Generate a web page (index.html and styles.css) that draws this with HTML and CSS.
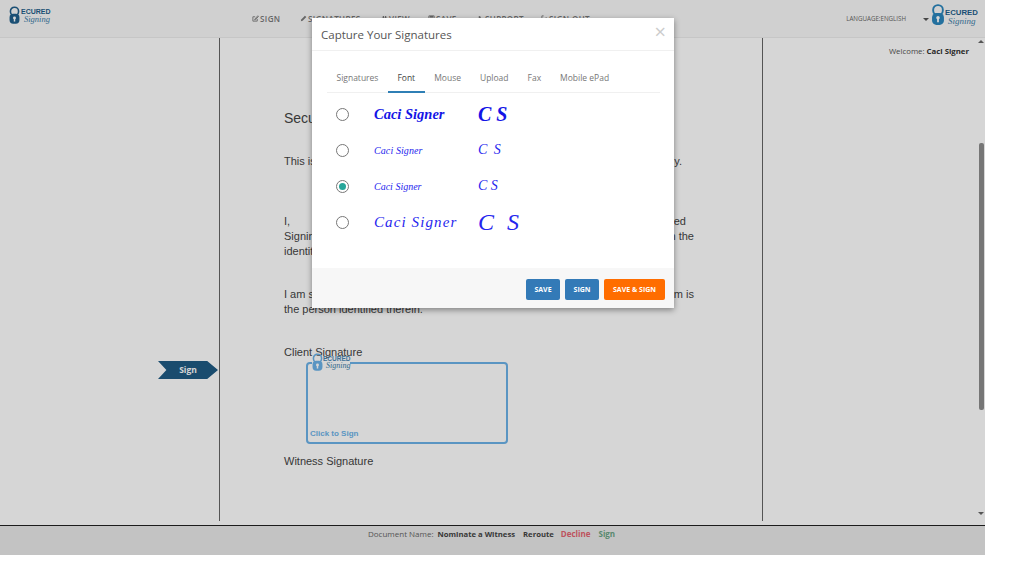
FILE: index.html
```html
<!DOCTYPE html>
<html lang="en">
<head>
    <meta charset="UTF-8">
    <meta name="viewport" content="width=device-width, initial-scale=1.0">
    <title>Capture Your Signatures</title>
    <link rel="stylesheet" href="styles.css">
</head>
<body>
    <svg class="defs" width="0" height="0">
        <symbol id="lock" viewBox="0 0 12 20">
            <rect x="1.6" y="1" width="8.8" height="9" rx="4.2" fill="none" stroke="currentColor" stroke-width="1.7"/>
            <rect x="0.6" y="8.2" width="10.8" height="10.8" rx="4" fill="currentColor"/>
            <circle cx="6" cy="12.6" r="1.6" fill="#fff"/>
            <rect x="5.2" y="13" width="1.6" height="3.6" fill="#fff"/>
        </symbol>
    </svg>

    <div class="app">
        <!-- Top bar -->
        <header class="topbar">
            <div class="logo logo-left">
                <svg class="logo-lock"><use href="#lock"/></svg>
                <div class="logo-text"><b>ECURED</b><i>Signing</i></div>
            </div>
            <nav class="nav">
                <a class="nav-item nav-sign">
                    <svg class="nav-icon" viewBox="0 0 8 8"><path d="M6 4.6V7H1V2h2.6M3.2 4.8 6.6.9l.8.7L4 5.4l-1 .2z" fill="none" stroke="currentColor"/></svg>SIGN
                </a>
                <a class="nav-item nav-signatures">
                    <svg class="nav-icon" viewBox="0 0 8 8"><path d="M1 7l.4-2L5.600.8l1.700 1.600L3 6.600z" fill="currentColor"/></svg>SIGNATURES
                </a>
                <a class="nav-item nav-view">
                    <svg class="nav-icon" viewBox="0 0 8 8"><path d="M1 3h6v4H1zM2 1h1.500v2H2zM4.500 1H6v2H4.500z" fill="currentColor"/></svg>VIEW
                </a>
                <a class="nav-item nav-save">
                    <svg class="nav-icon" viewBox="0 0 8 8"><path d="M1 1h6v6H1z" fill="none" stroke="currentColor"/><path d="M2 1h4v2H2z" fill="currentColor"/></svg>SAVE
                </a>
                <a class="nav-item nav-support">
                    <svg class="nav-icon" viewBox="0 0 8 8"><path d="M2 1.500 3.500 1l1 2-1 .7c.3.700.6 1 1.300 1.300l.7-1 2 1-.5 1.500C4 7 1.500 4.500 2 1.500z" fill="currentColor"/></svg>SUPPORT
                </a>
                <a class="nav-item nav-out">
                    <svg class="nav-icon" viewBox="0 0 8 8"><path d="M3 1H1v6h2M3 4h4M5.500 2.500 7 4 5.500 5.500" fill="none" stroke="currentColor"/></svg>SIGN OUT
                </a>
            </nav>
            <div class="top-right">
                <div class="language">LANGUAGE:ENGLISH</div>
                <div class="caret"></div>
                <div class="logo logo-right">
                    <svg class="logo-lock"><use href="#lock"/></svg>
                    <div class="logo-text"><b>ECURED</b><i>Signing</i></div>
                </div>
            </div>
        </header>

        <!-- Document area -->
        <main class="main">
            <div class="gutter">
                <div class="sign-tag">Sign</div>
            </div>
            <div class="doc">
                <div class="doc-title">Secured</div>
                <div class="para first">
                    <div class="line"><span>This is</span><span>electronically.</span></div>
                </div>
                <div class="para second">
                    <div class="line line-a"><span>I,</span><span>Secured</span></div>
                    <div class="line"><span>Signing</span><span>in the</span></div>
                    <div class="line"><span>identity</span></div>
                </div>
                <div class="para third">
                    <div class="line"><span>I am satisfied</span><span>form is</span></div>
                    <div class="line"><span>the person identified therein.</span></div>
                </div>
                <div class="client-label">Client Signature</div>
                <div class="sig-box">
                    <div class="logo logo-box">
                        <svg class="logo-lock"><use href="#lock"/></svg>
                        <div class="logo-text"><b>ECURED</b><i>Signing</i></div>
                    </div>
                    <span class="click-sign">Click to Sign</span>
                </div>
                <div class="witness-label">Witness Signature</div>
            </div>
            <aside class="side">
                <div class="welcome">Welcome: <b>Caci Signer</b></div>
                <div class="scrollbar">
                    <div class="arrow-up"></div>
                    <div class="thumb"></div>
                    <div class="arrow-down"></div>
                </div>
            </aside>
        </main>

        <!-- Bottom bar -->
        <footer class="bottombar">
            <span class="doc-name">Document Name:</span>
            <b class="doc-value">Nominate a Witness</b>
            <b class="act-reroute">Reroute</b>
            <b class="act-decline">Decline</b>
            <b class="act-sign">Sign</b>
        </footer>

        <div class="backdrop"></div>

        <!-- Modal -->
        <div class="modal">
            <div class="modal-head">
                <span class="modal-title">Capture Your Signatures</span>
                <span class="close">&times;</span>
            </div>
            <div class="modal-body">
                <div class="tabs">
                    <a class="tab">Signatures</a>
                    <a class="tab active">Font</a>
                    <a class="tab">Mouse</a>
                    <a class="tab">Upload</a>
                    <a class="tab">Fax</a>
                    <a class="tab">Mobile ePad</a>
                </div>
                <div class="sig-row">
                    <span class="radio"></span>
                    <span class="sig sig-one">Caci Signer</span>
                    <span class="ini ini-one">C S</span>
                </div>
                <div class="sig-row">
                    <span class="radio"></span>
                    <span class="sig sig-two">Caci Signer</span>
                    <span class="ini ini-two">C S</span>
                </div>
                <div class="sig-row">
                    <span class="radio checked"></span>
                    <span class="sig sig-three">Caci Signer</span>
                    <span class="ini ini-three">C S</span>
                </div>
                <div class="sig-row">
                    <span class="radio"></span>
                    <span class="sig sig-four">Caci Signer</span>
                    <span class="ini ini-four">C S</span>
                </div>
            </div>
            <div class="modal-foot">
                <button class="btn blue">SAVE</button>
                <button class="btn blue">SIGN</button>
                <button class="btn orange">SAVE &amp; SIGN</button>
            </div>
        </div>
    </div>
</body>
</html>
```

FILE: styles.css
```css
html, body {
    margin: 0;
    padding: 0;
    background: #fff;
}
body {
    width: 1024px;
    height: 571px;
    overflow: hidden;
    font-family: "Open Sans", sans-serif;
    color: #333;
}
.defs {
    display: block;
    height: 0;
}
.app {
    position: relative;
    width: 985px;
    height: 555px;
    display: flex;
    flex-direction: column;
    background: #fff;
}

/* top bar */
.topbar {
    height: 37px;
    border-bottom: 1px solid #ececec;
    background: #f8f8f8;
    display: flex;
    align-items: flex-start;
    flex: none;
}
.logo {
    display: flex;
    color: #1f5f8b;
}
.logo-lock {
    width: 11px;
    height: 19px;
    flex: none;
}
.logo-text {
    display: flex;
    flex-direction: column;
    line-height: 1;
}
.logo-text b {
    font: bold 7px "Liberation Sans", sans-serif;
}
.logo-text i {
    font: italic 8.5px/8px "Liberation Serif", serif;
    margin-left: 3px;
    color: #3d7ea8;
}
.logo-left {
    margin: 6px 0 0 9px;
    width: 42px;
    flex: none;
}
.logo-left .logo-text {
    margin: 2px 0 0 1px;
}
.nav {
    margin: 13px 0 0 201px;
    display: flex;
    font-size: 8px;
    font-weight: 600;
    letter-spacing: .4px;
    line-height: 11px;
    color: #7a7a7a;
    white-space: nowrap;
}
.nav-item {
    display: flex;
    align-items: center;
    gap: 1px;
}
.nav-icon {
    width: 7px;
    height: 7px;
    flex: none;
}
.nav-sign { width: 48px; }
.nav-signatures { width: 81px; }
.nav-view { width: 47px; }
.nav-save { width: 49px; }
.nav-support { width: 64px; }
.nav-out { width: 49px; }
.top-right {
    margin-left: auto;
    padding-right: 8px;
    display: flex;
    align-items: flex-start;
}
.language {
    font-size: 6.2px;
    line-height: 10px;
    margin-top: 14px;
    color: #666;
    white-space: nowrap;
}
.caret {
    margin: 18px 0 0 17px;
    border-left: 3px solid transparent;
    border-right: 3px solid transparent;
    border-top: 3px solid #555;
}
.logo-right {
    margin: 4px 0 0 2px;
    width: 46px;
    color: #2a86bd;
}
.logo-right .logo-lock {
    width: 14px;
    height: 22px;
}
.logo-right .logo-text {
    margin-top: 4px;
}
.logo-right .logo-text b {
    font-size: 7.8px;
    color: #1f5f8b;
}
.logo-right .logo-text i {
    font-size: 9px;
    line-height: 9px;
}

/* document */
.main {
    height: 487px;
    display: flex;
    flex: none;
}
.gutter {
    width: 219px;
    flex: none;
}
.sign-tag {
    width: 60px;
    height: 18px;
    margin: 323px 0 0 158px;
    background: #1f5b83;
    color: #fff;
    font: bold 8.5px/18px "Open Sans", sans-serif;
    text-align: center;
    clip-path: polygon(0 0, 82% 0, 100% 50%, 82% 100%, 0 100%, 14% 50%);
}
.doc {
    width: 544px;
    height: 483px;
    flex: none;
    box-sizing: border-box;
    border-left: 1px solid #666;
    border-right: 1px solid #666;
    padding: 72px 0 0 64px;
    font-family: "Liberation Sans", Arial, sans-serif;
    font-size: 11px;
    line-height: 15px;
    color: #444;
}
.doc-title {
    font-size: 14px;
    line-height: 16px;
}
.para.first {
    margin-top: 28px;
}
.para.second {
    margin-top: 45px;
}
.para.third {
    margin-top: 28px;
}
.line {
    width: 410px;
    display: flex;
    justify-content: space-between;
    white-space: nowrap;
}
.first .line {
    width: 398px;
}
.line-a {
    width: 402px;
}
.client-label {
    margin-top: 28px;
}
.sig-box {
    position: relative;
    box-sizing: border-box;
    width: 202px;
    height: 82px;
    margin: 2px 0 0 22px;
    border: 2px solid #6cb2e8;
    border-radius: 4px;
    display: flex;
    align-items: flex-end;
}
.logo-box {
    position: absolute;
    top: -11px;
    left: 4px;
    width: 38px;
    height: 19px;
    background: linear-gradient(transparent 9px, #fff 9px);
    color: #6cb2e8;
}
.logo-box .logo-text {
    margin-top: 2px;
}
.logo-box .logo-text b {
    font-size: 6.5px;
    line-height: 7px;
    color: #4b87b5;
}
.logo-box .logo-text i {
    font-size: 8px;
}
.click-sign {
    font-size: 8px;
    font-weight: bold;
    line-height: 10px;
    color: #6cb2e8;
    margin: 0 0 3px 2px;
}
.witness-label {
    margin-top: 10px;
}
.side {
    width: 222px;
    flex: none;
    display: flex;
    justify-content: flex-end;
}
.welcome {
    font-size: 7.8px;
    line-height: 12px;
    margin: 7px 8px 0 0;
    white-space: nowrap;
    color: #555;
}
.welcome b {
    color: #333;
}
.scrollbar {
    width: 8px;
    flex: none;
    display: flex;
    flex-direction: column;
    align-items: center;
}
.thumb {
    width: 5px;
    height: 267px;
    margin: 100px 0 102px;
    background: #8d8d8d;
    border-radius: 2px;
}
.arrow-up, .arrow-down {
    border-left: 3px solid transparent;
    border-right: 3px solid transparent;
}
.arrow-up {
    margin-top: 2px;
    border-bottom: 3px solid #666;
}
.arrow-down {
    border-top: 3px solid #666;
}

/* bottom bar */
.bottombar {
    height: 30px;
    box-sizing: border-box;
    border-top: 1px solid #222;
    background: #e9e9e9;
    display: flex;
    align-items: flex-start;
    padding: 2px 0 0 368px;
    font-size: 8px;
    line-height: 12px;
    white-space: nowrap;
    flex: none;
}
.doc-name { color: #666; }
.doc-value { margin-left: 4px; color: #444; font-size: 7.7px; }
.act-reroute { margin-left: 8px; color: #444; font-size: 7.7px; }
.act-decline { margin-left: 7px; color: #e2636f; }
.act-sign { margin-left: 8px; color: #6aa484; }

/* modal */
.backdrop {
    position: absolute;
    inset: 0;
    background: rgba(0, 0, 0, .16);
}
.modal {
    position: absolute;
    top: 18px;
    left: 312px;
    width: 362px;
    height: 290px;
    background: #fff;
    box-shadow: 0 2px 6px rgba(0, 0, 0, .4);
    display: flex;
    flex-direction: column;
}
.modal-head {
    height: 32px;
    border-bottom: 1px solid #f0f0f0;
    padding: 0 9px;
    display: flex;
    align-items: center;
    justify-content: space-between;
    flex: none;
}
.modal-title {
    font-size: 11.5px;
    color: #555;
}
.close {
    font-size: 20px;
    line-height: 20px;
    color: #ccc;
    margin: -5px -1px 0 0;
}
.modal-body {
    flex: 1;
    padding: 19px 14px 0 15px;
}
.tabs {
    height: 22px;
    display: flex;
    border-bottom: 1px solid #f0f0f0;
    font-size: 8.5px;
    line-height: 16px;
    color: #777;
}
.tab {
    padding: 0 9.5px;
    height: 21px;
}
.tab.active {
    color: #444;
    border-bottom: 2px solid #2f7fb5;
}
.sig-row {
    height: 36px;
    display: flex;
    align-items: center;
    padding-left: 9px;
    color: #2626ee;
    font-family: "Liberation Serif", serif;
    font-style: italic;
    white-space: nowrap;
}
.tabs + .sig-row {
    margin-top: 3px;
}
.radio {
    width: 13px;
    height: 13px;
    box-sizing: border-box;
    border: 1.5px solid #777;
    border-radius: 50%;
    flex: none;
    display: flex;
    align-items: center;
    justify-content: center;
}
.radio.checked::after {
    content: '';
    width: 7px;
    height: 7px;
    border-radius: 50%;
    background: #26a69a;
}
.sig {
    margin-left: 25px;
    width: 104px;
}
.sig-one { font-size: 14.5px; font-weight: bold; color: #1414e6; }
.sig-two { font-size: 10px; letter-spacing: .1px; }
.sig-three { font-size: 10px; }
.sig-four { font-size: 15px; letter-spacing: 1.1px; }
.ini-one { font-size: 20px; font-weight: bold; color: #1414e6; }
.ini-two { font-size: 14px; word-spacing: 3px; }
.ini-three { font-size: 14px; }
.ini-four { font-size: 24px; word-spacing: 7px; }
.modal-foot {
    height: 40px;
    background: #f7f7f7;
    display: flex;
    justify-content: flex-end;
    align-items: flex-start;
    gap: 5px;
    padding: 11px 9px 0 0;
    box-sizing: border-box;
    flex: none;
}
.btn {
    height: 21px;
    border: none;
    border-radius: 2px;
    padding: 0;
    color: #fff;
    font: bold 7px "Open Sans", sans-serif;
}
.btn.blue {
    width: 34px;
    background: #337ab7;
}
.btn.orange {
    width: 61px;
    background: #ff6d00;
}
```
